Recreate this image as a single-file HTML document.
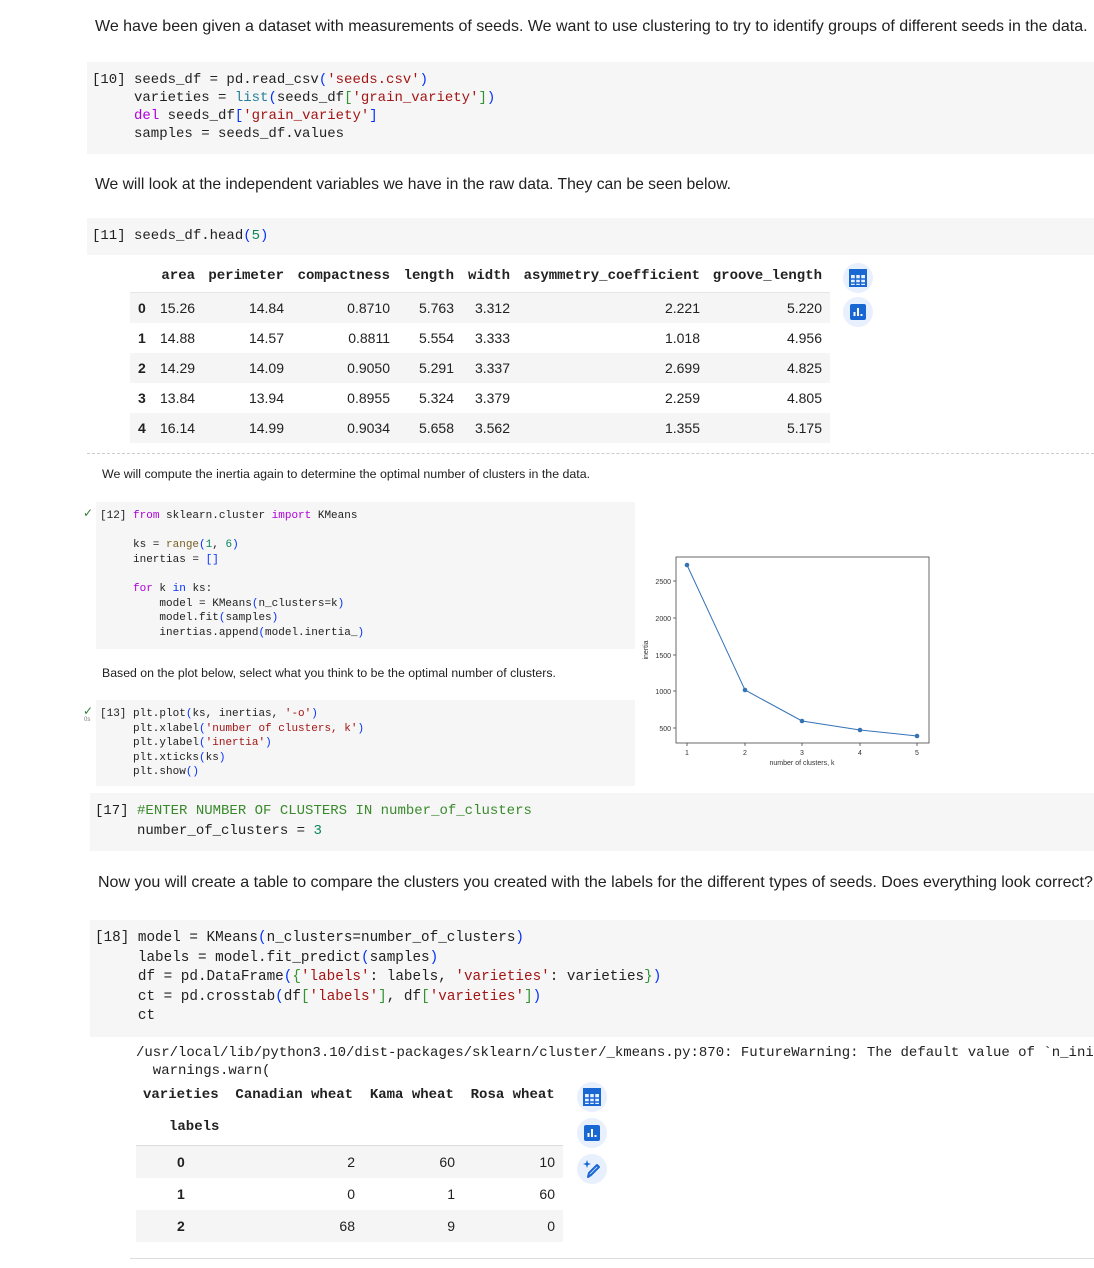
<!DOCTYPE html>
<html style="overflow:hidden"><head><meta charset="utf-8"><style>
*{margin:0;padding:0;box-sizing:border-box}
html,body{width:1094px;height:1268px;overflow:hidden}
body{background:#fff;position:relative;font-family:"Liberation Sans",sans-serif;color:#212121}
.a{position:absolute;white-space:pre}
.bg{position:absolute;background:#f6f6f6}
.m{font-family:"Liberation Mono",monospace}
.k{color:#af00db}.s{color:#a31515}.b{color:#0431fa}.n{color:#098658}.t{color:#267f99}.f{color:#795e26}.c{color:#3a8a2c}.g{color:#319331}
.ic{position:absolute;width:30px;height:30px;border-radius:50%;background:#e8f0fe}
.col{position:absolute;font-size:14px;line-height:30px;text-align:right;white-space:pre}
.h{position:absolute;top:268px;font-family:"Liberation Mono",monospace;font-size:14px;font-weight:bold;text-align:right;white-space:pre}
</style></head><body>

<div class="a" style="left:95px;top:18px;font-size:16px">We have been given a dataset with measurements of seeds. We want to use clustering to try to identify groups of different seeds in the data.</div>

<div class="bg" style="left:87px;top:62px;width:1007px;height:92px"></div>
<div class="a m" style="left:92px;top:71px;font-size:14px;line-height:18px">[10] seeds_df = pd.read_csv<span class="b">(</span><span class="s">'seeds.csv'</span><span class="b">)</span>
     varieties = <span class="t">list</span><span class="b">(</span>seeds_df<span class="g">[</span><span class="s">'grain_variety'</span><span class="g">]</span><span class="b">)</span>
     <span class="k">del</span> seeds_df<span class="b">[</span><span class="s">'grain_variety'</span><span class="b">]</span>
     samples = seeds_df.values</div>

<div class="a" style="left:95px;top:176px;font-size:15.7px">We will look at the independent variables we have in the raw data. They can be seen below.</div>

<div class="bg" style="left:87px;top:218px;width:1007px;height:37px"></div>
<div class="a m" style="left:92px;top:227px;font-size:14px;line-height:18px">[11] seeds_df.head<span class="b">(</span><span class="n">5</span><span class="b">)</span></div>

<!-- table 1 -->
<div class="bg" style="left:130px;top:293px;width:700px;height:30px;background:#f5f5f5"></div>
<div class="bg" style="left:130px;top:353px;width:700px;height:30px;background:#f5f5f5"></div>
<div class="bg" style="left:130px;top:413px;width:700px;height:30px;background:#f5f5f5"></div>
<div style="position:absolute;left:130px;top:292px;width:700px;height:1px;background:#e6e6e6"></div>
<div class="h" style="right:899px">area</div>
<div class="h" style="right:810px">perimeter</div>
<div class="h" style="right:704px">compactness</div>
<div class="h" style="right:640px">length</div>
<div class="h" style="right:584px">width</div>
<div class="h" style="right:394px">asymmetry_coefficient</div>
<div class="h" style="right:272px">groove_length</div>
<div class="col" style="left:138px;top:293px;font-weight:bold;text-align:left">0<br>1<br>2<br>3<br>4</div>
<div class="col" style="left:160px;top:293px;text-align:left">15.26<br>14.88<br>14.29<br>13.84<br>16.14</div>
<div class="col" style="right:810px;top:293px">14.84<br>14.57<br>14.09<br>13.94<br>14.99</div>
<div class="col" style="right:704px;top:293px">0.8710<br>0.8811<br>0.9050<br>0.8955<br>0.9034</div>
<div class="col" style="right:640px;top:293px">5.763<br>5.554<br>5.291<br>5.324<br>5.658</div>
<div class="col" style="right:584px;top:293px">3.312<br>3.333<br>3.337<br>3.379<br>3.562</div>
<div class="col" style="right:394px;top:293px">2.221<br>1.018<br>2.699<br>2.259<br>1.355</div>
<div class="col" style="right:272px;top:293px">5.220<br>4.956<br>4.825<br>4.805<br>5.175</div>

<div class="ic" style="left:843px;top:263px"></div>
<svg style="position:absolute;left:849px;top:269px" width="18" height="18" viewBox="0 0 18 18"><rect x="1" y="1" width="16" height="16" fill="none" stroke="#1967d2" stroke-width="2"/><rect x="1" y="1" width="16" height="5" fill="#1967d2"/><path d="M1 10H17M1 14H17M6.5 6V17M11.5 6V17" stroke="#1967d2" stroke-width="1.5"/></svg>
<div class="ic" style="left:843px;top:297px"></div>
<svg style="position:absolute;left:849px;top:303px" width="18" height="18" viewBox="0 0 18 18"><rect x="1" y="1" width="16" height="16" rx="2" fill="#1967d2"/><path d="M5.5 13V9M9 13V5M12.5 13V11" stroke="#fff" stroke-width="2"/></svg>

<div style="position:absolute;left:87px;top:453px;width:1007px;border-top:1px dashed #ccc"></div>

<div class="a" style="left:102px;top:467px;font-size:12.4px">We will compute the inertia again to determine the optimal number of clusters in the data.</div>

<div class="a" style="left:83px;top:506px;font-size:12px;color:#2e7d32">✓</div>
<div class="bg" style="left:96px;top:502px;width:539px;height:147px"></div>
<div class="a m" style="left:100px;top:509px;font-size:11px;line-height:14.6px">[12] <span class="k">from</span> sklearn.cluster <span class="k">import</span> KMeans

     ks = <span class="f">range</span><span class="b">(</span><span class="n">1</span>, <span class="n">6</span><span class="b">)</span>
     inertias = <span class="b">[]</span>

     <span class="k">for</span> k <span class="b">in</span> ks:
         model = KMeans<span class="b">(</span>n_clusters=k<span class="b">)</span>
         model.fit<span class="b">(</span>samples<span class="b">)</span>
         inertias.append<span class="b">(</span>model.inertia_<span class="b">)</span></div>

<div class="a" style="left:102px;top:666px;font-size:12.3px">Based on the plot below, select what you think to be the optimal number of clusters.</div>

<div class="a" style="left:83px;top:704px;font-size:12px;color:#2e7d32">✓</div>
<div class="a" style="left:84px;top:717px;font-size:6px;color:#777">0s</div>
<div class="bg" style="left:96px;top:700px;width:539px;height:86px"></div>
<div class="a m" style="left:100px;top:707px;font-size:11px;line-height:14.6px">[13] plt.plot<span class="b">(</span>ks, inertias, <span class="s">'-o'</span><span class="b">)</span>
     plt.xlabel<span class="b">(</span><span class="s">'number of clusters, k'</span><span class="b">)</span>
     plt.ylabel<span class="b">(</span><span class="s">'inertia'</span><span class="b">)</span>
     plt.xticks<span class="b">(</span>ks<span class="b">)</span>
     plt.show<span class="b">()</span></div>

<svg style="position:absolute;left:640px;top:550px" width="300" height="220" viewBox="640 550 300 220" font-family="Liberation Sans" font-size="7" fill="#333">
<rect x="676" y="557" width="253" height="186" fill="none" stroke="#444" stroke-width="0.8"/>
<g stroke="#444" stroke-width="0.8"><path d="M673 581H676M673 618H676M673 655H676M673 691H676M673 728H676M687 743V746M745 743V746M802 743V746M860 743V746M917 743V746"/></g>
<g text-anchor="end"><text x="671" y="584">2500</text><text x="671" y="621">2000</text><text x="671" y="658">1500</text><text x="671" y="694">1000</text><text x="671" y="731">500</text></g>
<g text-anchor="middle"><text x="687" y="755">1</text><text x="745" y="755">2</text><text x="802" y="755">3</text><text x="860" y="755">4</text><text x="917" y="755">5</text><text x="802" y="765">number of clusters, k</text></g>
<text x="648" y="650" transform="rotate(-90 648 650)" text-anchor="middle">inertia</text>
<polyline points="687,565 745,690 802,721 860,730 917,736" fill="none" stroke="#3573b5" stroke-width="1"/>
<g fill="#3573b5"><circle cx="687" cy="565" r="2.3"/><circle cx="745" cy="690" r="2.3"/><circle cx="802" cy="721" r="2.3"/><circle cx="860" cy="730" r="2.3"/><circle cx="917" cy="736" r="2.3"/></g>
</svg>

<div class="bg" style="left:90px;top:793px;width:1004px;height:58px"></div>
<div class="a m" style="left:95px;top:801px;font-size:14px;line-height:20px">[17] <span class="c">#ENTER NUMBER OF CLUSTERS IN number_of_clusters</span>
     number_of_clusters = <span class="n">3</span></div>

<div class="a" style="left:98px;top:874px;font-size:16px">Now you will create a table to compare the clusters you created with the labels for the different types of seeds. Does everything look correct?</div>

<div class="bg" style="left:90px;top:920px;width:1004px;height:117px"></div>
<div class="a m" style="left:95px;top:929px;font-size:14.3px;line-height:19.5px">[18] model = KMeans<span class="b">(</span>n_clusters=number_of_clusters<span class="b">)</span>
     labels = model.fit_predict<span class="b">(</span>samples<span class="b">)</span>
     df = pd.DataFrame<span class="b">(</span><span class="g">{</span><span class="s">'labels'</span>: labels, <span class="s">'varieties'</span>: varieties<span class="g">}</span><span class="b">)</span>
     ct = pd.crosstab<span class="b">(</span>df<span class="g">[</span><span class="s">'labels'</span><span class="g">]</span>, df<span class="g">[</span><span class="s">'varieties'</span><span class="g">]</span><span class="b">)</span>
     ct</div>

<div class="a m" style="left:136px;top:1044px;font-size:14px;line-height:18px">/usr/local/lib/python3.10/dist-packages/sklearn/cluster/_kmeans.py:870: FutureWarning: The default value of `n_init`
  warnings.warn(</div>

<div class="bg" style="left:136px;top:1146px;width:427px;height:32px;background:#f5f5f5"></div>
<div class="bg" style="left:136px;top:1210px;width:427px;height:32px;background:#f5f5f5"></div>
<div style="position:absolute;left:136px;top:1145px;width:427px;height:1px;background:#ddd"></div>
<div class="a m" style="left:143px;top:1087px;font-size:14px;font-weight:bold">varieties  Canadian wheat  Kama wheat  Rosa wheat</div>
<div class="a m" style="left:169px;top:1119px;font-size:14px;font-weight:bold">labels</div>
<div class="col" style="left:177px;top:1146px;line-height:32px;font-weight:bold;text-align:left">0<br>1<br>2</div>
<div class="col" style="right:739px;top:1146px;line-height:32px">2<br>0<br>68</div>
<div class="col" style="right:639px;top:1146px;line-height:32px">60<br>1<br>9</div>
<div class="col" style="right:539px;top:1146px;line-height:32px">10<br>60<br>0</div>
<div style="position:absolute;left:130px;top:1258px;width:964px;height:1px;background:#ddd"></div>

<div class="ic" style="left:577px;top:1082px"></div>
<svg style="position:absolute;left:583px;top:1088px" width="18" height="18" viewBox="0 0 18 18"><rect x="1" y="1" width="16" height="16" fill="none" stroke="#1967d2" stroke-width="2"/><rect x="1" y="1" width="16" height="5" fill="#1967d2"/><path d="M1 10H17M1 14H17M6.5 6V17M11.5 6V17" stroke="#1967d2" stroke-width="1.5"/></svg>
<div class="ic" style="left:577px;top:1118px"></div>
<svg style="position:absolute;left:583px;top:1124px" width="18" height="18" viewBox="0 0 18 18"><rect x="1" y="1" width="16" height="16" rx="2" fill="#1967d2"/><path d="M5.5 13V9M9 13V5M12.5 13V11" stroke="#fff" stroke-width="2"/></svg>
<div class="ic" style="left:577px;top:1154px"></div>
<svg style="position:absolute;left:582px;top:1159px" width="20" height="20" viewBox="0 0 20 20"><path d="M5 1L6 4L9 5L6 6L5 9L4 6L1 5L4 4Z" fill="#1967d2"/><path d="M6 18L7 14L15 6L17 8L9 16Z" fill="none" stroke="#1967d2" stroke-width="2" stroke-linejoin="round"/></svg>

</body></html>
